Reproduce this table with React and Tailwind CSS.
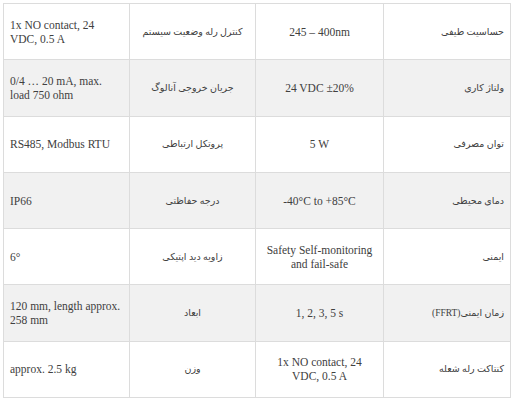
import React from "react";

const rows = [
  ["1x NO contact, 24 VDC, 0.5 A", "کنترل رله وضعیت سیستم", "245 – 400nm", "حساسیت طیفی"],
  ["0/4 … 20 mA, max. load 750 ohm", "جریان خروجی آنالوگ", "24 VDC ±20%", "ولتاژ کاری"],
  ["RS485, Modbus RTU", "پروتکل ارتباطی", "5 W", "توان مصرفی"],
  ["IP66", "درجه حفاظتی", "-40°C to +85°C", "دمای محیطی"],
  ["6°", "زاویه دید اپتیکی", "Safety Self-monitoring\nand fail-safe", "ایمنی"],
  ["120 mm, length approx. 258 mm", "ابعاد", "1, 2, 3, 5 s", "زمان ایمنی(FFRT)"],
  ["approx. 2.5 kg", "وزن", "1x NO contact, 24\nVDC, 0.5 A", "کنتاکت رله شعله"],
];

export default function App() {
  return (
    <div className="bg-white w-[515px] h-[400px] pt-[3px] pl-[3px]">
      <div
        className="grid grid-cols-[126px_126px_128px_127px] grid-rows-[repeat(7,56.3px)] border-t border-l border-[#dcdcdc] w-[508px] text-[#404040]"
        style={{ fontFamily: '"Liberation Serif", "DejaVu Sans", serif' }}
      >
        {rows.map((r, i) => {
          const bg = i % 2 === 1 ? "bg-[#f1f1f1]" : "bg-white";
          return (
            <React.Fragment key={i}>
              <div className={`${bg} border-r border-b border-[#dcdcdc] flex items-center px-[6px] text-[11.5px] leading-[14px]`}>
                <span>{r[0]}</span>
              </div>
              <div dir="rtl" className={`${bg} border-r border-b border-[#dcdcdc] flex items-center justify-center px-[4px] text-[9.5px] leading-[14px] whitespace-nowrap`}>
                <span>{r[1]}</span>
              </div>
              <div className={`${bg} border-r border-b border-[#dcdcdc] flex items-center justify-center text-center px-[6px] text-[11.5px] leading-[14px] whitespace-pre-line`}>
                <span>{r[2]}</span>
              </div>
              <div dir="rtl" className={`${bg} border-r border-b border-[#dcdcdc] flex items-center px-[6px] text-[9.5px] leading-[14px] whitespace-nowrap`}>
                <span>{r[3]}</span>
              </div>
            </React.Fragment>
          );
        })}
      </div>
    </div>
  );
}
